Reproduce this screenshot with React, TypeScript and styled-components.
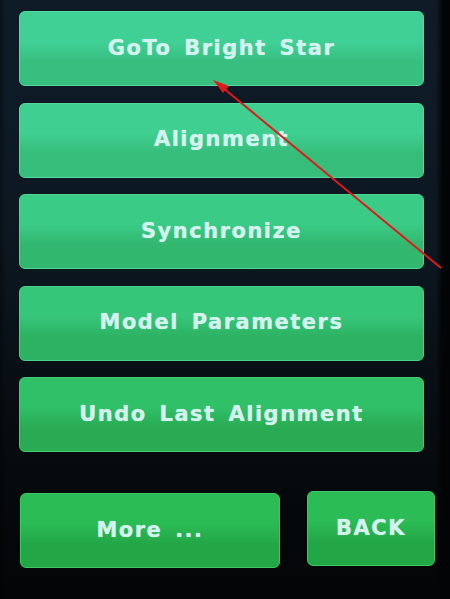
import React from "react";
import styled, { createGlobalStyle } from "styled-components";

const Global = createGlobalStyle`
  html, body { margin: 0; padding: 0; }
  body {
    width: 450px;
    height: 599px;
    overflow: hidden;
    background:
      linear-gradient(to right, rgba(0,0,0,0.35) 0, transparent 6px, transparent 436px, #020405 443px, #020405 450px),
      linear-gradient(to bottom, #0f1c28 0, #0c1720 250px, #070c10 420px, #030506 599px);
    font-family: "DejaVu Sans", "Liberation Sans", sans-serif;
  }
`;

const Screen = styled.div`
  position: relative;
  width: 450px;
  height: 599px;
  box-sizing: border-box;
  padding: 11px 0 0 19px;
  display: flex;
  flex-direction: column;
`;

const MenuList = styled.div`
  display: flex;
  flex-direction: column;
  gap: 16.5px;
  width: 405px;
`;

type Tone = { top: string; bottom: string; edge: string };

const tones: Tone[] = [
  { top: "#40d096", bottom: "#37bf80", edge: "#56daa4" },
  { top: "#3fcf90", bottom: "#36bd7a", edge: "#54d89e" },
  { top: "#3acb86", bottom: "#32b76e", edge: "#50d494" },
  { top: "#36c67a", bottom: "#2db262", edge: "#4ad088" },
  { top: "#30c068", bottom: "#29ab53", edge: "#44ca76" },
  { top: "#2bbc56", bottom: "#23a746", edge: "#3ec664" },
];

const MenuButton = styled.button<{ $tone: Tone; $w?: number }>`
  box-sizing: border-box;
  height: 75px;
  width: ${(p) => (p.$w ? `${p.$w}px` : "100%")};
  border-radius: 6px;
  border: 1px solid ${(p) => p.$tone.edge};
  background: linear-gradient(
    to bottom,
    ${(p) => p.$tone.top} 0%,
    ${(p) => p.$tone.top} 40%,
    ${(p) => p.$tone.bottom} 68%,
    ${(p) => p.$tone.bottom} 100%
  );
  color: #d4f3f0;
  font-family: "DejaVu Sans", "Liberation Sans", sans-serif;
  font-weight: bold;
  font-size: 21px;
  letter-spacing: 1.5px;
  word-spacing: 4px;
  display: flex;
  align-items: center;
  justify-content: center;
  padding: 0 0 2px 0;
  text-shadow: 0 0 1px rgba(210, 250, 240, 0.7);
`;

const BottomRow = styled.div`
  margin-top: 41px;
  display: flex;
  align-items: flex-start;
  gap: 27px;
  padding-left: 1px;
`;

const ArrowLayer = styled.svg`
  position: absolute;
  left: 0;
  top: 0;
  pointer-events: none;
`;

const items = [
  "GoTo Bright Star",
  "Alignment",
  "Synchronize",
  "Model Parameters",
  "Undo Last Alignment",
];

export default function App() {
  return (
    <>
      <Global />
      <Screen>
        <MenuList>
          {items.map((t, i) => (
            <MenuButton key={t} $tone={tones[i]}>
              {t}
            </MenuButton>
          ))}
        </MenuList>
        <BottomRow>
          <MenuButton $tone={tones[5]} $w={260}>
            More ...
          </MenuButton>
          <MenuButton $tone={tones[5]} $w={128} style={{ marginTop: -2 }}>
            BACK
          </MenuButton>
        </BottomRow>
        <ArrowLayer width="450" height="599" viewBox="0 0 450 599">
          <line x1="441" y1="268" x2="222" y2="87" stroke="#e01a1a" strokeWidth="2" />
          <polygon points="213,80 229,86 223,93" fill="#e01a1a" />
        </ArrowLayer>
      </Screen>
    </>
  );
}
